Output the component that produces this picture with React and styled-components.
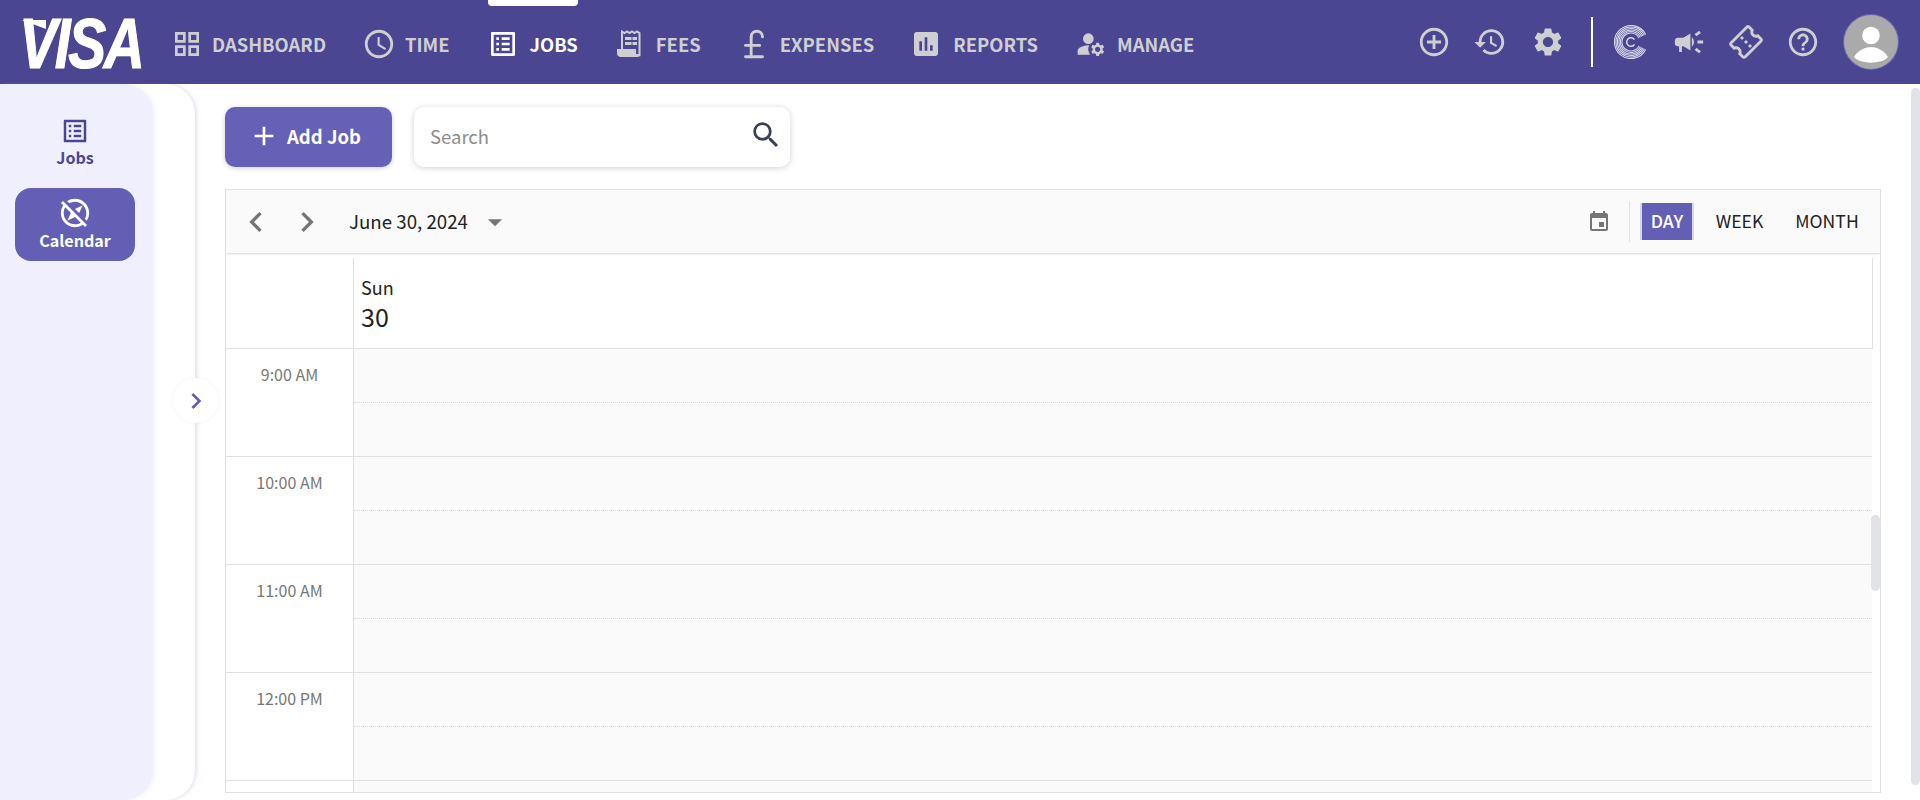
import React from "react";
import styled, { createGlobalStyle } from "styled-components";
import {
  MdOutlineGridView, MdAccessTime, MdOutlineListAlt, MdAssessment, MdManageAccounts,
  MdAddCircleOutline, MdRestore, MdSettings, MdCampaign, MdOutlineConfirmationNumber,
  MdHelpOutline, MdOutlineExploreOff, MdSearch, MdEvent, MdChevronLeft, MdChevronRight,
  MdArrowDropDown, MdAdd,
} from "react-icons/md";
import { LuPoundSterling } from "react-icons/lu";

const Global = createGlobalStyle`
  html, body { margin: 0; height: 800px; overflow: hidden; background: #fff; }
  body { font-family: "Noto Sans CJK SC", "Noto Sans", sans-serif; }
  * { box-sizing: border-box; }
`;

const Page = styled.div`
  width: 1920px; height: 800px; display: flex; flex-direction: column; position: relative; overflow: hidden;
`;
const Header = styled.header`
  height: 84px; flex: none; background: #4b4691; display: flex; align-items: center; padding-left: 22px; color: #cfcfd2;
`;
const Logo = styled.div`
  position: relative; width: 118px; height: 84px; margin-right: 31px; display: flex; align-items: center; justify-content: center;
  font: italic 700 71px/1 "Liberation Sans", sans-serif; color: #fff; letter-spacing: -3px;
  -webkit-text-stroke: 1.2px #fff; padding-top: 3px;
  span { display: block; transform: scaleX(.8); }
  &::before {
    content: ""; position: absolute; left: 0; top: 20px; width: 24px; height: 9px; background: #fff;
    clip-path: polygon(0 0, 100% 0, 100% 100%);
  }
`;
const Nav = styled.nav`display: flex; height: 84px; flex: none;`;
const NavItem = styled.a`
  position: relative; display: flex; align-items: center; height: 84px; gap: ${p => p.$gap}px; padding-top: 4px;
  margin-right: ${p => p.$mr}px; font-size: 18.4px; font-weight: 600;
  color: ${p => (p.$active ? "#fff" : "#cfcfd2")};
  svg { flex: none; }
`;
const ActiveBar = styled.i`
  position: absolute; left: 1px; right: 0; top: 0; height: 6px; background: #fff; border-radius: 0 0 4px 4px;
`;
const Tools = styled.div`margin-left: auto; display: flex; align-items: center; padding-right: 22px;`;
const ToolIcon = styled.span`
  display: flex; align-items: center; justify-content: center; width: ${p => p.$w}px; margin-right: ${p => p.$mr}px;
`;
const TicketIcon = styled(MdOutlineConfirmationNumber)`transform: rotate(-45deg);`;
const Rule = styled.span`width: 2px; height: 50px; background: #fff; margin-right: 21px;`;
const Avatar = styled.span`
  width: 54px; height: 54px; border-radius: 50%; background: #aaa; box-shadow: 0 0 0 1px #6a66b0;
  display: flex; align-items: center; justify-content: center; overflow: hidden;
`;
const Body = styled.div`flex: 1; display: flex; min-height: 0;`;
const SideWrap = styled.aside`
  width: 195px; flex: none; height: 716px; background: #fff; border-radius: 0 30px 30px 0; position: relative;
  box-shadow: 2px 0 4px rgba(140, 90, 180, .2);
`;
const Side = styled.div`
  width: 153px; height: 100%; background: #f0effe; border-radius: 0 30px 30px 0; padding: 32px 18px 0 15px;
  display: flex; flex-direction: column; gap: 20px; box-shadow: 2px 0 4px rgba(150,140,220,.12);
`;
const SideItem = styled.div`
  height: ${p => (p.$active ? 73 : 52)}px; border-radius: 16px; display: flex; flex-direction: column; align-items: center;
  justify-content: ${p => (p.$active ? "center" : "flex-start")};
  padding-bottom: ${p => (p.$active ? 3 : 0)}px;
  background: ${p => (p.$active ? "#625fb5" : "transparent")}; color: ${p => (p.$active ? "#fff" : "#4b4691")};
  font-size: 16.1px; font-weight: 600; line-height: ${p => (p.$active ? 20 : 22)}px;
`;
const Toggle = styled.button`
  position: absolute; left: 173px; top: 294px; width: 45px; height: 45px; border-radius: 50%; border: 0; background: #fff; padding: 0;
  color: #625fb5; display: flex; align-items: center; justify-content: center; box-shadow: 0 0 4px rgba(0,0,0,.05);
`;
const Main = styled.main`flex: 1; min-width: 0; padding: 23px 0 0 30px;`;
const Bar = styled.div`display: flex; gap: 22px; height: 60px;`;
const AddBtn = styled.button`
  width: 167px; height: 60px; border: 0; border-radius: 10px; background: #6561b6; color: #fff; display: flex; align-items: center;
  gap: 7px; font: 600 18.5px "Noto Sans CJK SC", sans-serif; box-shadow: 0 1px 5px rgba(0,0,0,.2); padding: 0 0 2px 23px;
`;
const SearchBox = styled.div`
  width: 376px; height: 60px; border-radius: 10px; background: #fff; box-shadow: 0 1px 6px rgba(0,0,0,.18);
  display: flex; align-items: center; justify-content: space-between; padding: 0 7px 3px 16px; color: #8d8d8d; font-size: 18.5px;
  svg { color: #3a4056; margin-top: -1px; }
`;
const Cal = styled.section`
  margin-top: 22px; width: 1656px; height: 604px; border: 1px solid #e0e0e0; background: #fff; position: relative; overflow: hidden;
`;
const CalBar = styled.div`
  height: 63px; background: #fafafa; box-shadow: 0 1px 2px rgba(0,0,0,.16); display: flex; align-items: center; padding: 0 11px 0 10px; color: #222; font-size: 18.7px;
`;
const DateText = styled.span`padding-bottom: 2px;`;
const Nudge = styled.span`display: flex; color: #757575; margin: 0 ${p => p.$mr ?? 0}px 0 ${p => p.$ml ?? 0}px;`;
const Spacer = styled.span`flex: 1;`;
const Divider = styled.span`width: 1px; height: 41px; background: #e0e0e0; margin: 0 10px 0 18px;`;
const ViewBtn = styled.span`
  height: 37px; width: ${p => p.$w}px; display: flex; align-items: center; justify-content: center; font-size: 17.6px; padding-bottom: 2px;
  ${p => p.$active && "background:#625fb5;color:#fff;border-left:2px solid #d8d8e4;border-right:2px solid #d8d8e4;font-weight:500;"}
`;
const Grid = styled.div`
  display: grid; grid-template-columns: 127px 1520px; margin-top: 5px;
`;
const Corner = styled.div`height: 91px; border-bottom: 1px solid #e0e0e0;`;
const DayHead = styled.div`
  height: 91px; border: 1px solid #e0e0e0; border-top: 0; padding: 17px 0 0 7px; color: #222; font-size: 18px; line-height: 24px;
  b { display: block; font-weight: 400; font-size: 25px; line-height: 34px; }
`;
const TimeCell = styled.div`
  height: 108px; border-bottom: 1px solid #e0e0e0; color: #777; font-size: 16px; text-align: center; padding-top: 14px; line-height: 22px;
`;
const SlotCell = styled.div`
  height: 108px; width: 1519px; border-bottom: 1px solid #e0e0e0; border-left: 1px solid #e0e0e0; background: #fafafa; position: relative;
  &::after { content: ""; position: absolute; left: 0; right: 0; top: 53px; border-top: 1px dotted #d4d4d4; }
`;
const CalScroll = styled.i`
  position: absolute; right: 0; top: 325px; width: 9px; height: 76px; border-radius: 5px; background: #e2e3e8;
`;
const PageScroll = styled.i`
  position: absolute; right: 0; top: 88px; width: 9px; height: 697px; border-radius: 5px; background: #e2e3e8;
`;

const FeesIcon = () => (
  <svg width="26" height="28" viewBox="0 0 26 28" fill="none">
    <path d="M5 1.500l2.500 1.500 2.500-1.500 2.500 1.500 2.500-1.500 2.500 1.500 2.500-1.500 2.500 1.500V25H5z" stroke="#cfcfd2" strokeWidth="2" />
    <path d="M8 7h6.500v3H8zM15.500 7H20v3h-4.500zM8 12h6.500v3H8zM15.500 12H20v3h-4.500z" fill="#cfcfd2" />
    <path d="M0 19h19v4c0 2 1.500 3.500 5 4H4c-2.500 0-4-1.500-4-4z" fill="#cfcfd2" />
  </svg>
);

const CLogo = () => (
  <svg width="34" height="34" viewBox="0 0 34 34" fill="none" stroke="#d8d8ec">
    {[16.5, 15, 13.5, 12, 10.5, 9].map(r => (
      <path key={r} d={`M${17 + r * 0.89} ${17 - r * 0.45}A${r} ${r} 0 1 0 ${17 + r * 0.89} ${17 + r * 0.45}`} strokeWidth="1.1" />
    ))}
    <path d="M20.500 14.500a4.300 4.300 0 1 0 0 5" strokeWidth="1.5" />
  </svg>
);

const PersonIcon = () => (
  <svg width="54" height="54" viewBox="0 0 54 54" fill="#fff">
    <circle cx="27" cy="20.500" r="8.800" />
    <path d="M10 42C14 35 22 32 27 32S40 35 44 42C38 49.500 16 49.500 10 42z" />
  </svg>
);

const hours = ["9:00 AM", "10:00 AM", "11:00 AM", "12:00 PM", ""];

export default function App() {
  return (
    <Page>
      <Global />
      <Header>
        <Logo><span>VISA</span></Logo>
        <Nav>
          <NavItem $mr={36} $gap={9}><MdOutlineGridView size={32} />DASHBOARD</NavItem>
          <NavItem $mr={37} $gap={9}><MdAccessTime size={34} />TIME</NavItem>
          <NavItem $mr={39} $active $gap={11}><ActiveBar /><MdOutlineListAlt size={32} />JOBS</NavItem>
          <NavItem $mr={36} $gap={13}><FeesIcon />FEES</NavItem>
          <NavItem $mr={36} $gap={9}><LuPoundSterling size={34} />EXPENSES</NavItem>
          <NavItem $mr={37} $gap={11}><MdAssessment size={32} />REPORTS</NavItem>
          <NavItem $mr={0} $gap={10}><MdManageAccounts size={32} />MANAGE</NavItem>
        </Nav>
        <Tools>
          <ToolIcon $w={34} $mr={22}><MdAddCircleOutline size={34} /></ToolIcon>
          <ToolIcon $w={34} $mr={24}><MdRestore size={34} /></ToolIcon>
          <ToolIcon $w={34} $mr={26}><MdSettings size={34} /></ToolIcon>
          <Rule />
          <ToolIcon $w={34} $mr={24}><CLogo /></ToolIcon>
          <ToolIcon $w={34} $mr={21}><MdCampaign size={34} /></ToolIcon>
          <ToolIcon $w={38} $mr={21}><TicketIcon size={34} /></ToolIcon>
          <ToolIcon $w={34} $mr={24}><MdHelpOutline size={34} /></ToolIcon>
          <Avatar><PersonIcon /></Avatar>
        </Tools>
      </Header>
      <Body>
        <SideWrap>
          <Side>
            <SideItem><MdOutlineListAlt size={32} />Jobs</SideItem>
            <SideItem $active><MdOutlineExploreOff size={34} />Calendar</SideItem>
          </Side>
          <Toggle><MdChevronRight size={32} /></Toggle>
        </SideWrap>
        <Main>
          <Bar>
            <AddBtn><MdAdd size={32} />Add Job</AddBtn>
            <SearchBox>Search<MdSearch size={34} /></SearchBox>
          </Bar>
          <Cal>
            <CalBar>
              <Nudge $mr={11}><MdChevronLeft size={40} /></Nudge>
              <Nudge $mr={22}><MdChevronRight size={40} /></Nudge>
              <DateText>June 30, 2024</DateText>
              <Nudge $ml={10}><MdArrowDropDown size={34} /></Nudge>
              <Spacer />
              <Nudge><MdEvent size={24} /></Nudge>
              <Divider />
              <ViewBtn $active $w={54}>DAY</ViewBtn>
              <ViewBtn $w={91}>WEEK</ViewBtn>
              <ViewBtn $w={84}>MONTH</ViewBtn>
            </CalBar>
            <Grid>
              <Corner />
              <DayHead>Sun<b>30</b></DayHead>
              {hours.map((h, i) => (
                <React.Fragment key={i}>
                  <TimeCell>{h}</TimeCell>
                  <SlotCell />
                </React.Fragment>
              ))}
            </Grid>
            <CalScroll />
          </Cal>
        </Main>
      </Body>
      <PageScroll />
    </Page>
  );
}
